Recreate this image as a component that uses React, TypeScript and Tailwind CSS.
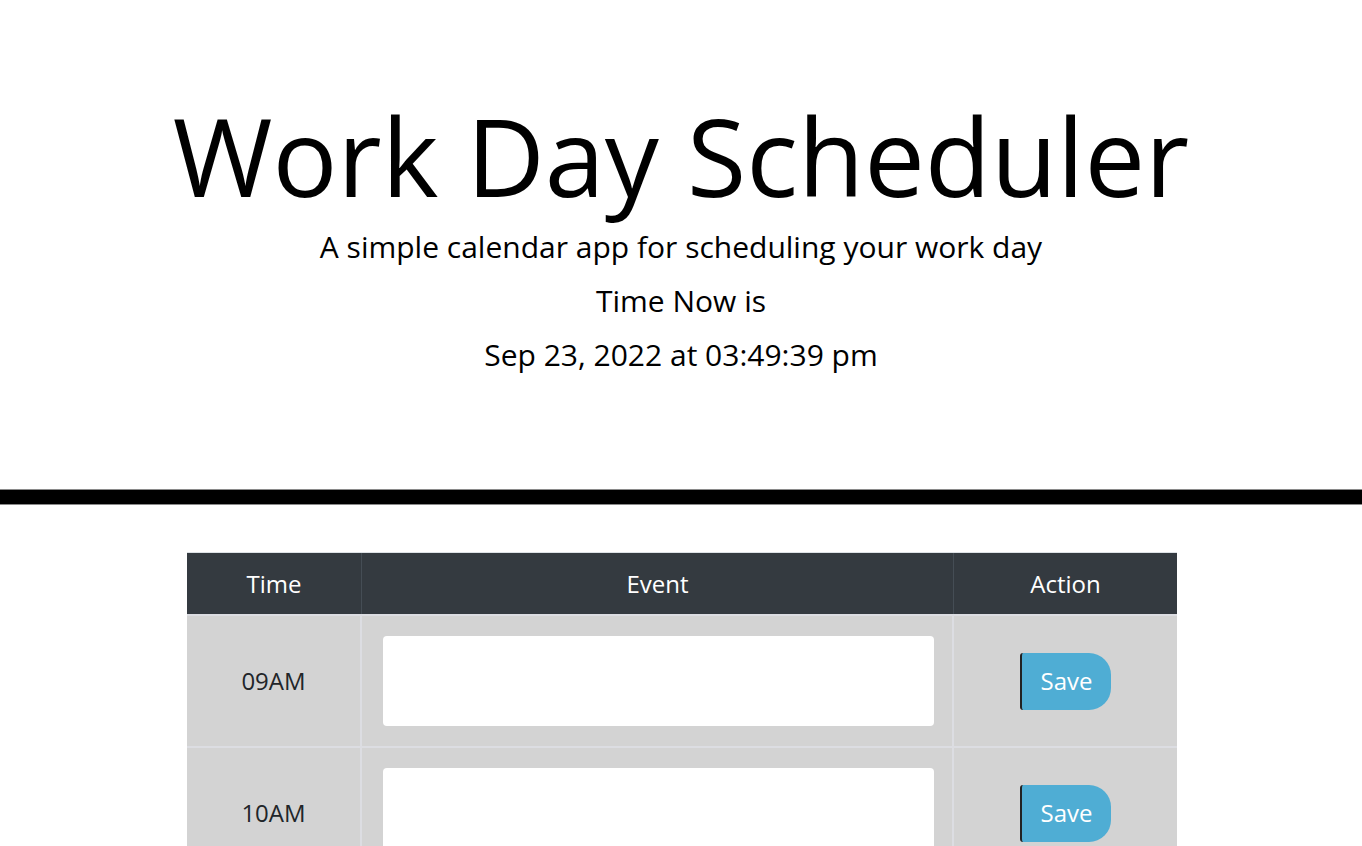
import React from 'react';

const hours = ['09AM', '10AM', '11AM', '12PM', '01PM', '02PM', '03PM', '04PM', '05PM'];

const font = { fontFamily: '"Open Sans", "Noto Sans", sans-serif' };

export default function App() {
  return (
    <div className="min-h-screen bg-white text-black" style={font}>
      <header className="pt-[91px] pb-[112px] text-center">
        <h1 className="text-[108px] leading-[130px] font-normal">Work Day Scheduler</h1>
        <p className="mt-[3px] text-[30px] leading-[45px]">
          A simple calendar app for scheduling your work day
        </p>
        <p className="mt-[9px] text-[30px] leading-[45px]">Time Now is</p>
        <p className="mt-[9px] text-[30px] leading-[45px]">Sep 23, 2022 at 03:49:39 pm</p>
      </header>

      <div className="h-[16px] border-y border-[#8a8a8a] bg-black" />

      <main className="flex justify-center pl-[2px] pt-[47px] pb-10">
        <div className="w-[990px]">
          <div className="grid grid-cols-[175px_592px_223px] border-t border-[#dee2e6] bg-[#343a40] text-[24px] text-white">
            <div className="flex h-[61px] items-center justify-center border-r border-[#454d55]">Time</div>
            <div className="flex h-[61px] items-center justify-center border-r border-[#454d55]">Event</div>
            <div className="flex h-[61px] items-center justify-center">Action</div>
          </div>
          {hours.map((h) => (
            <div
              key={h}
              className="grid grid-cols-[175px_592px_223px] border-t-2 border-[#dcdde2] bg-[#d3d3d3] text-[24px] text-[#212529]"
            >
              <div className="flex h-[130px] items-center justify-center border-r-2 border-[#dcdde2]">{h}</div>
              <div className="flex h-[130px] items-start border-r-2 border-[#dcdde2] pl-[21px] pr-[18px] pt-[20px]">
                <textarea className="h-[90px] w-full resize-none rounded-[4px] bg-white outline-none" />
              </div>
              <div className="flex h-[130px] items-center justify-center">
                <button className="h-[57px] w-[91px] rounded-l-[3px] rounded-r-[22px] border-l-2 border-[#222] bg-[#4fadd4] text-[24px] text-white">
                  Save
                </button>
              </div>
            </div>
          ))}
        </div>
      </main>
    </div>
  );
}
